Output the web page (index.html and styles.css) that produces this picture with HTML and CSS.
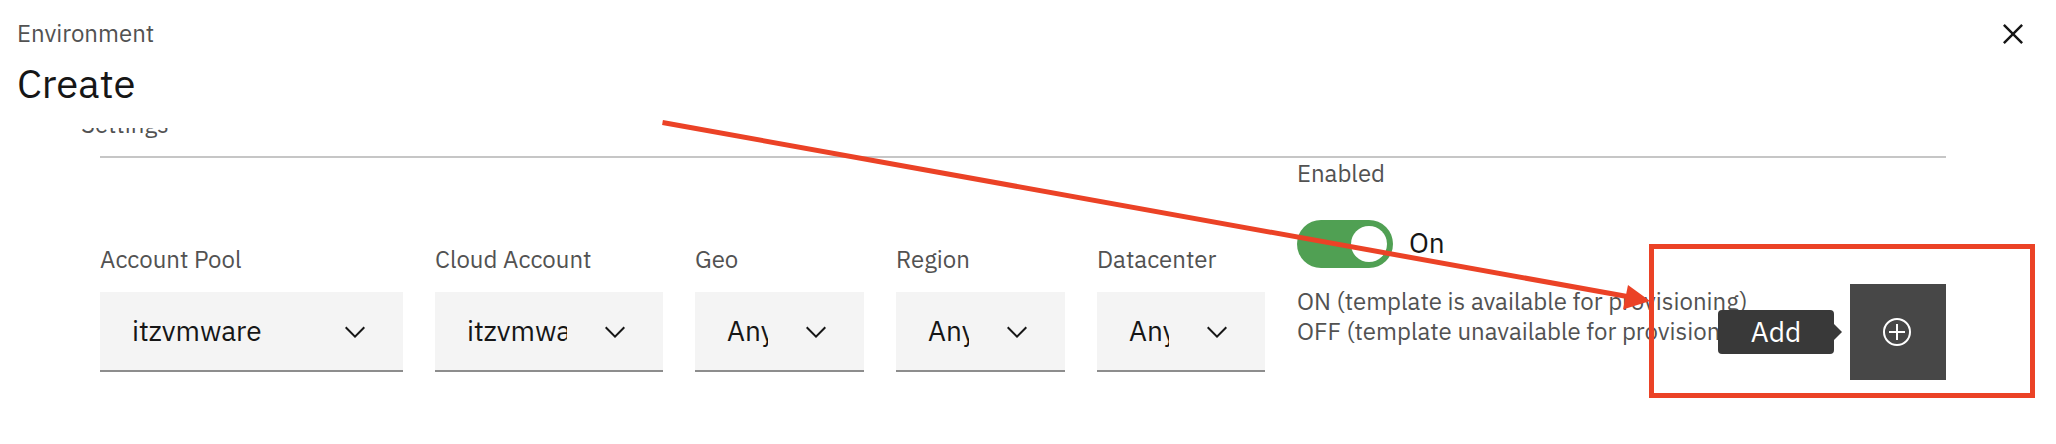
FILE: index.html
```html
<!DOCTYPE html>
<html lang="en">
<head>
<meta charset="utf-8">
<meta name="viewport" content="width=device-width, initial-scale=1">
<title>Create Environment</title>
<link rel="stylesheet" href="styles.css">
</head>
<body>
<div class="modal">
  <header class="modal-header">
    <div>
      <p class="eyebrow">Environment</p>
      <h1 class="title">Create</h1>
    </div>
    <button class="close" type="button" aria-label="Close">
      <svg viewBox="0 0 32 32" width="40" height="40" fill="currentColor"><path d="M24 9.4L22.6 8 16 14.6 9.4 8 8 9.4 14.6 16 8 22.6 9.4 24 16 17.4 22.6 24 24 22.6 17.4 16z"/></svg>
    </button>
  </header>

  <main class="modal-content">
    <h2 class="section-label">Settings</h2>
    <form class="row">
      <div class="field">
        <label for="pool">Account Pool</label>
        <div class="select-wrap">
          <select id="pool"><option>itzvmware</option></select>
          <svg class="chevron" viewBox="0 0 16 16"><path d="M8 11L3 6 3.7 5.3 8 9.6 12.3 5.3 13 6z"/></svg>
        </div>
      </div>
      <div class="field">
        <label for="account">Cloud Account</label>
        <div class="select-wrap">
          <select id="account"><option>itzvmware</option></select>
          <svg class="chevron" viewBox="0 0 16 16"><path d="M8 11L3 6 3.7 5.3 8 9.6 12.3 5.3 13 6z"/></svg>
        </div>
      </div>
      <div class="field">
        <label for="geo">Geo</label>
        <div class="select-wrap">
          <select id="geo"><option>Any</option></select>
          <svg class="chevron" viewBox="0 0 16 16"><path d="M8 11L3 6 3.7 5.3 8 9.6 12.3 5.3 13 6z"/></svg>
        </div>
      </div>
      <div class="field">
        <label for="region">Region</label>
        <div class="select-wrap">
          <select id="region"><option>Any</option></select>
          <svg class="chevron" viewBox="0 0 16 16"><path d="M8 11L3 6 3.7 5.3 8 9.6 12.3 5.3 13 6z"/></svg>
        </div>
      </div>
      <div class="field">
        <label for="datacenter">Datacenter</label>
        <div class="select-wrap">
          <select id="datacenter"><option>Any</option></select>
          <svg class="chevron" viewBox="0 0 16 16"><path d="M8 11L3 6 3.7 5.3 8 9.6 12.3 5.3 13 6z"/></svg>
        </div>
      </div>
      <div class="enabled">
        <label for="enabled">Enabled</label>
        <div class="toggle-line">
          <input class="toggle" id="enabled" type="checkbox" role="switch" checked>
          <span class="toggle-text">On</span>
        </div>
        <p class="help">ON (template is available for provisioning)<br>OFF (template unavailable for provisioning)</p>
      </div>
      <div class="add-cell">
        <button class="add" type="button" aria-labelledby="add-tip">
          <svg viewBox="0 0 32 32" width="32" height="32" fill="none" stroke="currentColor" stroke-width="2"><circle cx="15" cy="16" r="13"/><path d="M15 8v16M7 16h16"/></svg>
        </button>
        <span class="tooltip" id="add-tip" role="tooltip">Add</span>
      </div>
    </form>
  </main>

  <svg class="annotation" viewBox="0 0 2056 444" aria-hidden="true">
    <path d="M662.500 122.500L1630 297" fill="none" stroke="#eb4226" stroke-width="5"/>
    <path d="M1628 285L1650 301 1623 309.500z" fill="#eb4226"/>
    <rect x="1651.500" y="246.500" width="381" height="149" fill="none" stroke="#eb4226" stroke-width="5"/>
  </svg>
</div>
</body>
</html>
```
FILE: styles.css
```css
* {
  box-sizing: border-box;
}

body {
  margin: 0;
  background: #fff;
  color: #161616;
  font-family: "IBM Plex Sans", Inter, "Noto Sans", sans-serif;
  font-size: 28px;
}

h1,
h2,
p {
  margin: 0;
  font-weight: 400;
}

.modal {
  position: relative;
  min-height: 100vh;
  overflow: hidden;
}

.modal-header {
  display: flex;
  justify-content: space-between;
  align-items: flex-start;
  height: 128px;
  padding: 18px 17px 0;
}

.eyebrow,
.section-label,
.help,
label {
  color: #525252;
  font-size: 24px;
  line-height: 30px;
}

.title {
  margin-top: 9px;
  font-size: 40px;
  line-height: 52px;
}

.close {
  display: flex;
  margin-top: -4px;
  padding: 0 6px;
  border: 0;
  background: none;
  color: #161616;
}

.modal-content {
  overflow: hidden;
  padding: 0 110px 0 100px;
}

.section-label {
  margin: -19px 0 17px -19px;
}

.row {
  display: grid;
  grid-template-columns:
    minmax(0, 303fr) minmax(0, 228fr) minmax(0, 169fr) minmax(0, 169fr)
    minmax(0, 168fr) minmax(0, 521fr) 96px;
  column-gap: 32px;
  align-items: start;
  padding-bottom: 64px;
  border-top: 2px solid #c6c6c6;
}

.field {
  padding-top: 86px;
}

label {
  display: block;
  white-space: nowrap;
}

.select-wrap {
  position: relative;
  margin-top: 18px;
}

select {
  display: block;
  width: 100%;
  height: 80px;
  padding: 0 96px 2px 32px;
  border: 0;
  border-bottom: 2px solid #8d8d8d;
  border-radius: 0;
  background: #f4f4f4;
  color: #161616;
  font: inherit;
  appearance: none;
  text-overflow: clip;
}

.chevron {
  position: absolute;
  top: 24px;
  right: 32px;
  width: 32px;
  height: 32px;
  fill: #161616;
  pointer-events: none;
}

.toggle-line {
  display: flex;
  align-items: center;
  gap: 16px;
  margin: 32px 0 18px;
}

.toggle {
  display: flex;
  align-items: center;
  justify-content: flex-end;
  width: 96px;
  height: 48px;
  margin: 0;
  padding: 6px;
  border-radius: 24px;
  background: #50a053;
  appearance: none;
}

.toggle::before {
  content: "";
  width: 36px;
  height: 36px;
  border-radius: 50%;
  background: #fff;
}

.toggle:not(:checked) {
  justify-content: flex-start;
  background: #8d8d8d;
}

.toggle-text {
  padding-bottom: 2px;
  line-height: 36px;
}

.help {
  white-space: nowrap;
}

.add-cell {
  position: relative;
  margin-top: 126px;
}

.add {
  display: flex;
  align-items: center;
  justify-content: center;
  width: 96px;
  height: 96px;
  padding: 0;
  border: 0;
  background: #474747;
  color: #fff;
}

.tooltip {
  position: absolute;
  top: 26px;
  right: 112px;
  width: 116px;
  border-radius: 4px;
  background: #393939;
  color: #fff;
  line-height: 44px;
  text-align: center;
}

.tooltip::after {
  content: "";
  position: absolute;
  top: 14px;
  left: 100%;
  border: solid transparent;
  border-width: 8px 0 8px 8px;
  border-left-color: #393939;
}

.annotation {
  position: absolute;
  top: 0;
  left: 0;
  width: 100%;
  pointer-events: none;
}
```
